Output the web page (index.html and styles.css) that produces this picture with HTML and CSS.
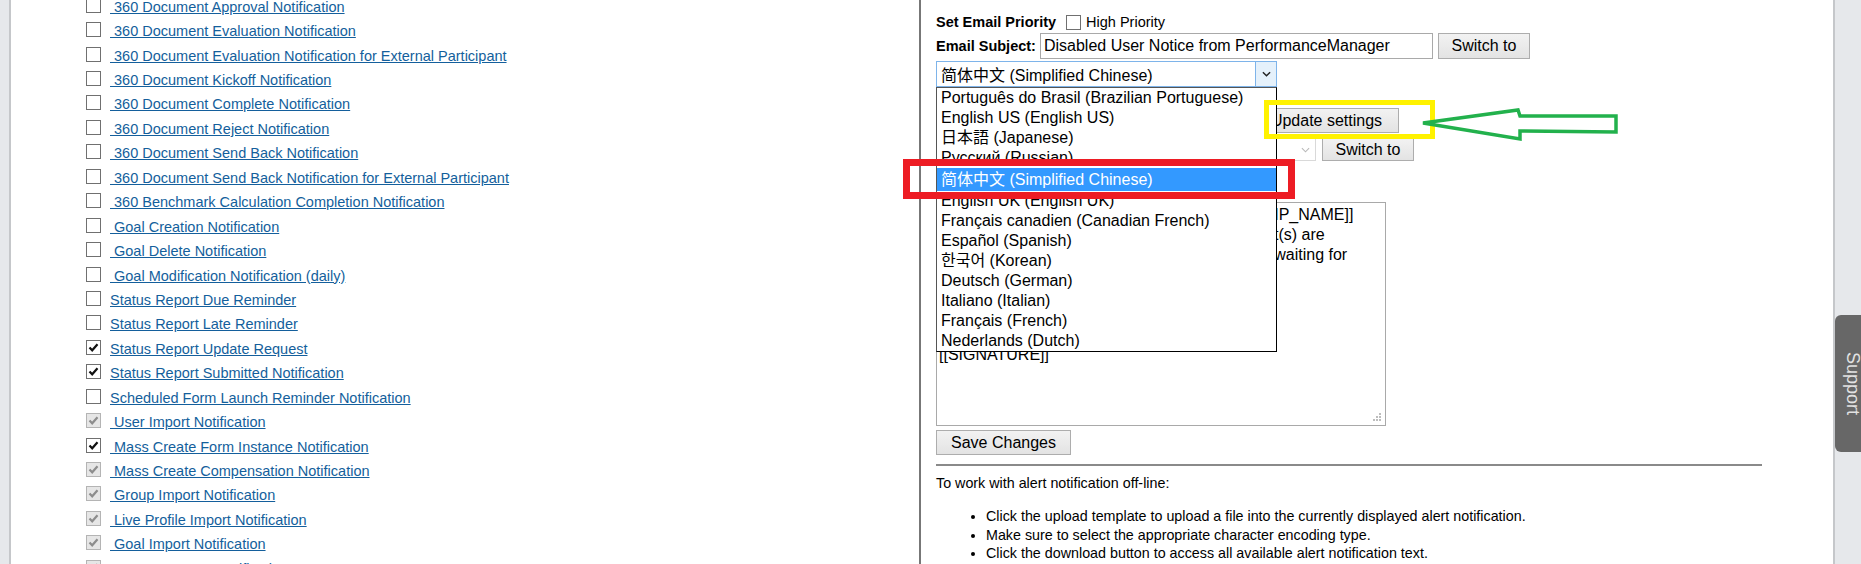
FILE: index.html
```html
<!DOCTYPE html>
<html lang="en">
<head>
  <meta charset="UTF-8" />
  <title>Alert Notification Templates</title>
  <link rel="stylesheet" href="styles.css">
</head>
<body>
  <div class="page">
    <div class="gutter gutter-left"></div>

    <div class="alerts">
      <ul class="alert-list">
        <li><span class="cb"></span><a href="#">&nbsp;360 Document Approval Notification</a></li>
        <li><span class="cb"></span><a href="#">&nbsp;360 Document Evaluation Notification</a></li>
        <li><span class="cb"></span><a href="#">&nbsp;360 Document Evaluation Notification for External Participant</a></li>
        <li><span class="cb"></span><a href="#">&nbsp;360 Document Kickoff Notification</a></li>
        <li><span class="cb"></span><a href="#">&nbsp;360 Document Complete Notification</a></li>
        <li><span class="cb"></span><a href="#">&nbsp;360 Document Reject Notification</a></li>
        <li><span class="cb"></span><a href="#">&nbsp;360 Document Send Back Notification</a></li>
        <li><span class="cb"></span><a href="#">&nbsp;360 Document Send Back Notification for External Participant</a></li>
        <li><span class="cb"></span><a href="#">&nbsp;360 Benchmark Calculation Completion Notification</a></li>
        <li><span class="cb"></span><a href="#">&nbsp;Goal Creation Notification</a></li>
        <li><span class="cb"></span><a href="#">&nbsp;Goal Delete Notification</a></li>
        <li><span class="cb"></span><a href="#">&nbsp;Goal Modification Notification (daily)</a></li>
        <li><span class="cb"></span><a href="#">Status Report Due Reminder</a></li>
        <li><span class="cb"></span><a href="#">Status Report Late Reminder</a></li>
        <li><span class="cb on"><svg viewBox="0 0 13 13"><polyline points="2.5,6.5 5.2,9.3 10.5,3.2"/></svg></span><a href="#">Status Report Update Request</a></li>
        <li><span class="cb on"><svg viewBox="0 0 13 13"><polyline points="2.5,6.5 5.2,9.3 10.5,3.2"/></svg></span><a href="#">Status Report Submitted Notification</a></li>
        <li><span class="cb"></span><a href="#">Scheduled Form Launch Reminder Notification</a></li>
        <li><span class="cb dis"><svg viewBox="0 0 13 13"><polyline points="2.5,6.5 5.2,9.3 10.5,3.2"/></svg></span><a href="#">&nbsp;User Import Notification</a></li>
        <li><span class="cb on"><svg viewBox="0 0 13 13"><polyline points="2.5,6.5 5.2,9.3 10.5,3.2"/></svg></span><a href="#">&nbsp;Mass Create Form Instance Notification</a></li>
        <li><span class="cb dis"><svg viewBox="0 0 13 13"><polyline points="2.5,6.5 5.2,9.3 10.5,3.2"/></svg></span><a href="#">&nbsp;Mass Create Compensation Notification</a></li>
        <li><span class="cb dis"><svg viewBox="0 0 13 13"><polyline points="2.5,6.5 5.2,9.3 10.5,3.2"/></svg></span><a href="#">&nbsp;Group Import Notification</a></li>
        <li><span class="cb dis"><svg viewBox="0 0 13 13"><polyline points="2.5,6.5 5.2,9.3 10.5,3.2"/></svg></span><a href="#">&nbsp;Live Profile Import Notification</a></li>
        <li><span class="cb dis"><svg viewBox="0 0 13 13"><polyline points="2.5,6.5 5.2,9.3 10.5,3.2"/></svg></span><a href="#">&nbsp;Goal Import Notification</a></li>
        <li><span class="cb dis"><svg viewBox="0 0 13 13"><polyline points="2.5,6.5 5.2,9.3 10.5,3.2"/></svg></span><a href="#">&nbsp;Export Process Notification</a></li>
      </ul>
    </div>

    <div class="editor">
      <div class="row priority">
        <b>Set Email Priority</b>
        <span class="cb"></span>
        <span>High Priority</span>
      </div>

      <div class="row subject">
        <b>Email Subject:</b>
        <input class="subject-input" type="text" value="Disabled User Notice from PerformanceManager">
        <button class="btn switch">Switch to</button>
      </div>

      <div class="lang-wrap">
        <div class="select focused">
          <span class="select-text">简体中文 (Simplified Chinese)</span>
          <span class="select-arrow"><svg viewBox="0 0 10 6"><polyline points="1,1 5,5 9,1"/></svg></span>
        </div>
        <ul class="dropdown">
          <li>Português do Brasil (Brazilian Portuguese)</li>
          <li>English US (English US)</li>
          <li lang="ja">日本語 (Japanese)</li>
          <li>Русский (Russian)</li>
          <li class="picked">简体中文 (Simplified Chinese)</li>
          <li>English UK (English UK)</li>
          <li>Français canadien (Canadian French)</li>
          <li>Español (Spanish)</li>
          <li lang="ko">한국어 (Korean)</li>
          <li>Deutsch (German)</li>
          <li>Italiano (Italian)</li>
          <li>Français (French)</li>
          <li>Nederlands (Dutch)</li>
        </ul>
      </div>

      <div class="row update">
        <button class="btn update-btn">Update settings</button>
      </div>

      <div class="row encoding">
        <div class="select plain">
          <span class="select-text">UTF-8</span>
          <span class="select-arrow"><svg viewBox="0 0 10 6"><polyline points="1,1 5,5 9,1"/></svg></span>
        </div>
        <button class="btn switch">Switch to</button>
      </div>

      <div class="body-wrap">
        <textarea class="body-text" readonly>Dear [[RECIPIENT_NAME]], the employee [[EMP_NAME]]
has been disabled in the system. The document(s) are
listed below are currently still in their inbox and waiting for
your action. Please reassign them.


Thank you,
[[SIGNATURE]]</textarea>
        <svg class="grip" viewBox="0 0 8 8"><rect x="6" y="0" width="2" height="2"/><rect x="3" y="3" width="2" height="2"/><rect x="6" y="3" width="2" height="2"/><rect x="0" y="6" width="2" height="2"/><rect x="3" y="6" width="2" height="2"/><rect x="6" y="6" width="2" height="2"/></svg>
      </div>

      <button class="btn save">Save Changes</button>

      <hr>

      <p class="offline">To work with alert notification off-line:</p>
      <ul class="tips">
        <li>Click the upload template to upload a file into the currently displayed alert notification.</li>
        <li>Make sure to select the appropriate character encoding type.</li>
        <li>Click the download button to access all available alert notification text.</li>
      </ul>
    </div>

    <div class="gutter gutter-right">
      <div class="support">Support</div>
    </div>
  </div>

  <!-- screenshot markup drawn on top -->
  <svg class="marks" viewBox="0 0 1861 564">
    <rect class="mark-yellow" x="1266.5" y="102.5" width="166" height="34"/>
    <rect class="mark-red" x="906.5" y="162.5" width="385" height="33"/>
    <polygon class="mark-green" points="1423,123 1518,110 1520,116 1616,116 1616,132 1520,131 1520,139"/>
  </svg>
</body>
</html>
```

FILE: styles.css
```css
html, body {
  margin: 0;
  height: 564px;
  overflow: hidden;
}

body {
  font-family: "Liberation Sans", Arial, "Noto Sans CJK SC", sans-serif;
  color: #000;
  background: #fff;
  position: relative;
}

.page {
  display: flex;
  height: 564px;
}

.gutter {
  background-color: #e6e8eb;
}

.gutter-left {
  width: 9px;
  border-right: 2px solid #c5c7ca;
}

.gutter-right {
  width: 26px;
  border-left: 2px solid #c5c7ca;
  position: relative;
}

.support {
  position: absolute;
  top: 315px;
  left: 0;
  width: 30px;
  height: 137px;
  background: #676767;
  border-radius: 6px 0 0 6px;
  color: #e2e2e2;
  font-size: 18px;
  writing-mode: vertical-rl;
  display: flex;
  align-items: center;
  justify-content: center;
  padding-left: 4px;
  box-sizing: border-box;
}

/* left column: alert list */
.alerts {
  width: 833px;
  padding-left: 75px;
  border-right: 2px solid #777;
}

.alert-list {
  list-style: none;
  margin: -7px 0 0;
  padding: 0;
  font-size: 14.5px;
}

.alert-list li {
  height: 24.45px;
  display: flex;
  align-items: center;
  gap: 9px;
}

.alert-list a {
  color: #145f9c;
  text-decoration: underline;
  white-space: nowrap;
  margin-top: 3px;
}

.cb {
  display: inline-block;
  width: 15px;
  height: 15px;
  box-sizing: border-box;
  border: 1px solid #707070;
  background: #fff;
  flex: none;
}

.cb svg {
  display: block;
  width: 13px;
  height: 13px;
  fill: none;
  stroke: #111;
  stroke-width: 2.2;
}

.cb.dis {
  background: #e6e6e6;
  border-color: #b4b4b4;
}

.cb.dis svg {
  stroke: #8d8d8d;
}

/* right column: editor */
.editor {
  flex: 1;
  padding: 11px 71px 0 15px;
  font-size: 14.5px;
}

.row {
  display: flex;
  align-items: center;
}

.priority {
  height: 22px;
}

.priority b {
  margin-right: 10px;
}

.priority .cb {
  margin-right: 5px;
}

.subject {
  height: 26px;
}

.subject b {
  margin-right: 4px;
}

.subject-input {
  width: 393px;
  height: 26px;
  box-sizing: border-box;
  border: 1px solid #a9a9a9;
  padding: 0 3px;
  font-family: inherit;
  font-size: 16px;
  color: #000;
}

.btn {
  font-family: inherit;
  font-size: 16px;
  color: #000;
  background: linear-gradient(#f2f2f2, #e3e3e3);
  border: 1px solid #adadad;
  border-radius: 0;
  padding: 0;
  box-sizing: border-box;
}

.switch {
  width: 92px;
  height: 26px;
  margin-left: 5px;
}

.lang-wrap {
  position: relative;
  margin-top: 2px;
  width: 341px;
}

.select {
  height: 26px;
  box-sizing: border-box;
  border: 1px solid #7eb4ea;
  display: flex;
  align-items: center;
  font-size: 16px;
  background: #fff;
}

.select-text {
  flex: 1;
  padding-left: 4px;
  white-space: nowrap;
}

.select-arrow {
  width: 20px;
  height: 100%;
  display: flex;
  align-items: center;
  justify-content: center;
  background: #e5f1fb;
  border-left: 1px solid #7eb4ea;
}

.select-arrow svg {
  width: 9px;
  height: 6px;
  fill: none;
  stroke: #222;
  stroke-width: 1.6;
}

.dropdown {
  position: absolute;
  top: 26px;
  left: 0;
  width: 341px;
  box-sizing: border-box;
  margin: 0;
  padding: 0;
  list-style: none;
  background: #fff;
  border: 1px solid #555;
  border-right-color: #000;
  border-bottom-color: #000;
  font-size: 16px;
  z-index: 3;
}

.dropdown li {
  height: 20px;
  line-height: 20px;
  padding-left: 4px;
  white-space: nowrap;
}

.dropdown li[lang="ja"] {
  font-family: "Liberation Sans", "Noto Sans CJK JP", sans-serif;
}

.dropdown li[lang="ko"] {
  font-family: "Liberation Sans", "Noto Sans CJK KR", sans-serif;
}

.dropdown li.picked {
  height: 23px;
  line-height: 23px;
  background: #3399ff;
  color: #fff;
}

.update {
  margin-top: 21px;
  height: 25px;
}

.update-btn {
  margin-left: 318px;
  width: 145px;
  height: 25px;
}

.encoding {
  margin-top: 5px;
  height: 23px;
}

.encoding .select {
  width: 380px;
  height: 23px;
  border-color: #d9d9d9;
}

.encoding .select-arrow {
  background: #fff;
  border-left: none;
}

.encoding .select-arrow svg {
  stroke: #b8b8b8;
  stroke-width: 1.2;
}

.encoding .switch {
  margin-left: 6px;
  height: 23px;
}

.body-wrap {
  position: relative;
  margin-top: 41px;
  width: 450px;
  height: 224px;
}

.body-text {
  width: 450px;
  height: 224px;
  box-sizing: border-box;
  border: 1px solid #a9a9a9;
  padding: 2px;
  margin: 0;
  resize: none;
  font-family: inherit;
  font-size: 16px;
  line-height: 20px;
  color: #000;
  white-space: pre;
  overflow: hidden;
}

.grip {
  position: absolute;
  right: 5px;
  bottom: 5px;
  width: 8px;
  height: 8px;
  fill: #bdbdbd;
}

.save {
  display: block;
  margin-top: 4px;
  width: 135px;
  height: 25px;
}

hr {
  margin: 9px 0 0;
  border: none;
  border-top: 2px solid #8a8a8a;
}

.offline {
  margin: 8px 0 0;
  font-size: 14.3px;
  line-height: 18px;
}

.tips {
  margin: 15px 0 0;
  padding-left: 50px;
  font-size: 14.3px;
  line-height: 18.5px;
}

/* annotation layer */
.marks {
  position: absolute;
  top: 0;
  left: 0;
  width: 1861px;
  height: 564px;
  pointer-events: none;
  z-index: 10;
}

.mark-yellow {
  fill: none;
  stroke: #fff200;
  stroke-width: 5;
}

.mark-red {
  fill: none;
  stroke: #ed1c24;
  stroke-width: 7;
}

.mark-green {
  fill: none;
  stroke: #22b14c;
  stroke-width: 3.5;
  stroke-linejoin: miter;
}
```
